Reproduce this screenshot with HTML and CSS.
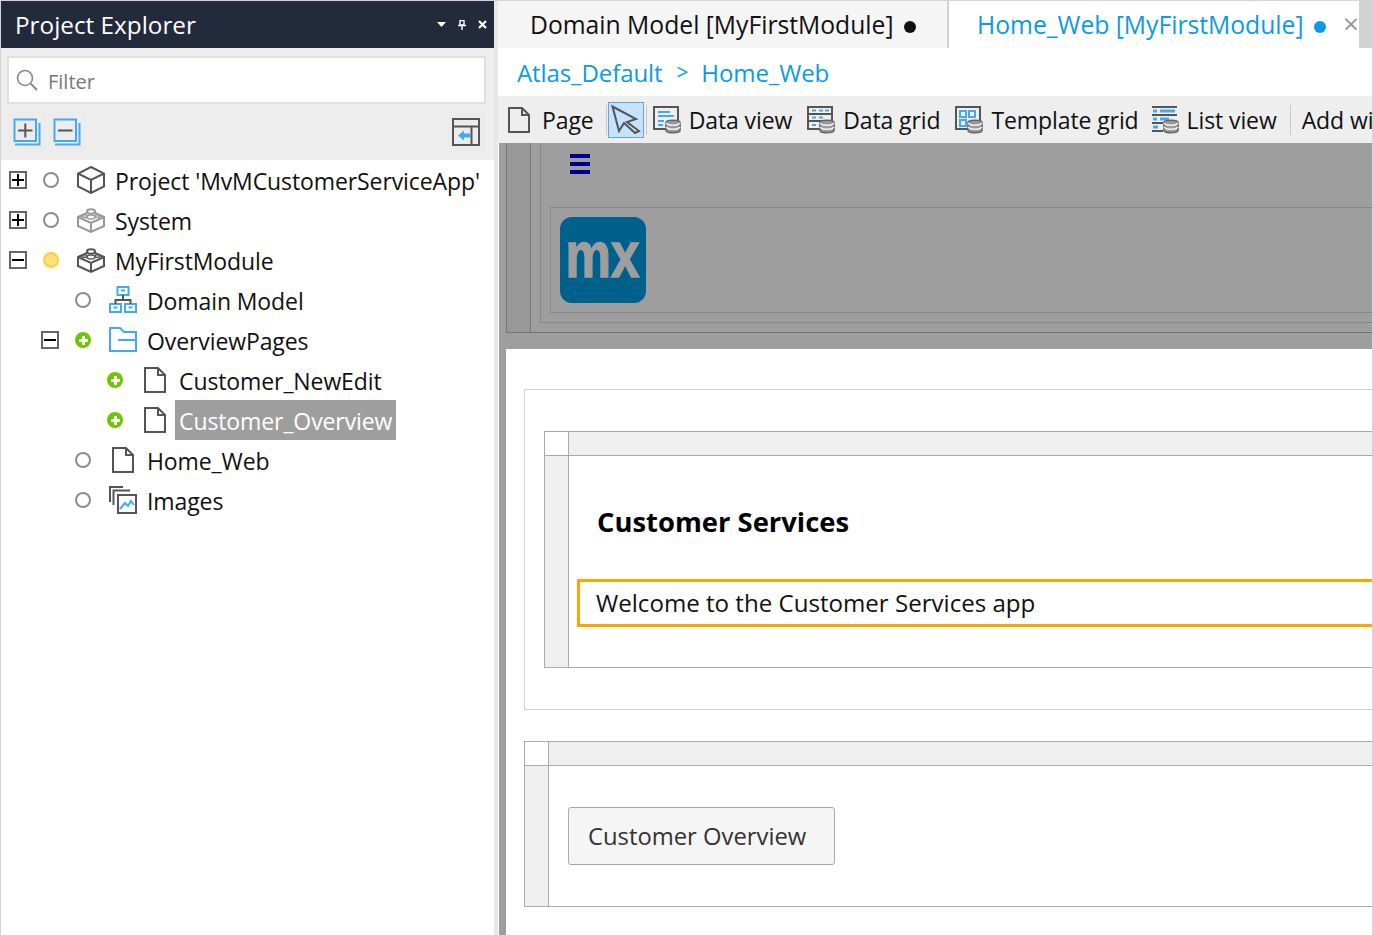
FILE: index.html
```html
<!DOCTYPE html>
<html>
<head>
<meta charset="UTF-8">
<title>Home_Web</title>
<link rel="stylesheet" href="styles.css">
</head>
<body>

<svg class="defs" width="0" height="0">
	<defs>
		<symbol id="page" viewBox="0 0 28 28">
			<path d="M4 2H17L24 9V26H4Z M17 2V9H24" fill="none" stroke="#555" stroke-width="2"/>
		</symbol>
		<symbol id="brick" viewBox="0 0 28 28">
			<path d="M1 11L14 5L27 11V20L14 26L1 20Z M1 11L14 17L27 11 M14 17V26" fill="none" stroke="currentColor" stroke-width="2"/>
			<ellipse cx="14" cy="5.5" rx="4" ry="2.2" fill="#fff" stroke="currentColor" stroke-width="2"/>
			<ellipse cx="14" cy="11" rx="4" ry="2" fill="none" stroke="currentColor" stroke-width="1.5"/>
			<ellipse cx="7.5" cy="10" rx="2.5" ry="1.3" fill="none" stroke="currentColor" stroke-width="1.5"/>
			<ellipse cx="20.5" cy="10" rx="2.5" ry="1.3" fill="none" stroke="currentColor" stroke-width="1.5"/>
		</symbol>
		<symbol id="db" viewBox="0 0 16 15">
			<path d="M1 3.5C1 .5 15 .5 15 3.5V11.5C15 14.5 1 14.5 1 11.5Z" fill="#999" stroke="#666" stroke-width="1.6"/>
			<path d="M1 4C3 7 13 7 15 4 M1 8C3 11 13 11 15 8" fill="none" stroke="#eee" stroke-width="1.4"/>
		</symbol>
	</defs>
</svg>

<div class="window">

	<!-- 왼쪽 패널 -->
	<div class="explorer">
		<div class="pane-title">
			<span>Project Explorer</span>
			<div class="pane-controls">
				<svg width="9" height="5" viewBox="0 0 9 5"><path d="M0 0H9L4.5 5Z" fill="#fff"/></svg>
				<svg width="8" height="10" viewBox="0 0 8 10"><path d="M2 .5H6V5H2Z M0 5.500H8 M4 6V10" fill="none" stroke="#fff" stroke-width="1.4"/></svg>
				<svg width="9" height="9" viewBox="0 0 9 9"><path d="M1 1L8 8M8 1L1 8" stroke="#fff" stroke-width="2.2"/></svg>
			</div>
		</div>

		<div class="pane-tools">
			<div class="filter">
				<svg width="22" height="22" viewBox="0 0 22 22"><circle cx="9" cy="9" r="7.500" fill="none" stroke="#888" stroke-width="1.6"/><path d="M14.500 14.500L21 21" stroke="#888" stroke-width="1.8"/></svg>
				<span>Filter</span>
			</div>
			<div class="tool-row">
				<span class="tool-btn">
					<svg width="28" height="28" viewBox="0 0 28 28"><path d="M1.500 1.500H23V23H1.500Z" fill="none" stroke="#42aaf5" stroke-width="2"/><path d="M26.500 5V26.500H2" fill="none" stroke="#42aaf5" stroke-width="2"/><path d="M5 12.500H19.500M12.300 5.500V19.500" stroke="#555" stroke-width="2"/></svg>
				</span>
				<span class="tool-btn">
					<svg width="28" height="28" viewBox="0 0 28 28"><path d="M1.500 1.500H23V23H1.500Z" fill="none" stroke="#42aaf5" stroke-width="2"/><path d="M26.500 5V26.500H2" fill="none" stroke="#42aaf5" stroke-width="2"/><path d="M5 12.500H19.500" stroke="#555" stroke-width="2"/></svg>
				</span>
				<span class="tool-btn tool-last">
					<svg width="28" height="28" viewBox="0 0 28 28"><path d="M1 1H27V27H1Z M1 8.500H27 M19.500 8.500V27" fill="none" stroke="#555" stroke-width="2"/><path d="M6 17.500L12 12.500V15.500H18V19.500H12V22.500Z" fill="#42aaf5"/></svg>
				</span>
			</div>
		</div>

		<div class="tree">
			<div class="row">
				<span class="exp"><i class="h"></i><i class="v"></i></span>
				<span class="dot"></span>
				<svg class="ico" viewBox="0 0 28 28"><path d="M14 1L27 7.500V20.500L14 27L1 20.500V7.500Z M1 7.500L14 14L27 7.500 M14 14V27" fill="none" stroke="#555" stroke-width="2"/></svg>
				<span class="label">Project 'MvMCustomerServiceApp'</span>
			</div>
			<div class="row">
				<span class="exp"><i class="h"></i><i class="v"></i></span>
				<span class="dot"></span>
				<svg class="ico faded"><use href="#brick"/></svg>
				<span class="label">System</span>
			</div>
			<div class="row">
				<span class="exp"><i class="h"></i></span>
				<span class="dot yellow"></span>
				<svg class="ico dark"><use href="#brick"/></svg>
				<span class="label">MyFirstModule</span>
			</div>
			<div class="row lvl1">
				<span class="exp none"></span>
				<span class="dot"></span>
				<svg class="ico" viewBox="0 0 28 28">
					<path d="M8.500 1H19.500V9H8.500Z M1 18H12V26H1Z M16 18H27V26H16Z" fill="none" stroke="#42aaf5" stroke-width="2"/>
					<path d="M14 9V14 M6.500 18V14H21.500V18" fill="none" stroke="#555" stroke-width="2"/>
					<path d="M12 4.500H16 M4.500 21.500H8.500 M19.500 21.500H23.500" stroke="#42aaf5" stroke-width="2"/>
				</svg>
				<span class="label">Domain Model</span>
			</div>
			<div class="row lvl1">
				<span class="exp"><i class="h"></i></span>
				<span class="dot green"></span>
				<svg class="ico" viewBox="0 0 28 28"><path d="M1 2H11L15 6H27V25H1Z M9 14H27" fill="none" stroke="#42aaf5" stroke-width="2"/></svg>
				<span class="label">OverviewPages</span>
			</div>
			<div class="row lvl2">
				<span class="exp none"></span>
				<span class="dot green"></span>
				<svg class="ico"><use href="#page"/></svg>
				<span class="label">Customer_NewEdit</span>
			</div>
			<div class="row lvl2">
				<span class="exp none"></span>
				<span class="dot green"></span>
				<svg class="ico"><use href="#page"/></svg>
				<span class="label selected">Customer_Overview</span>
			</div>
			<div class="row lvl1">
				<span class="exp none"></span>
				<span class="dot"></span>
				<svg class="ico"><use href="#page"/></svg>
				<span class="label">Home_Web</span>
			</div>
			<div class="row lvl1">
				<span class="exp none"></span>
				<span class="dot"></span>
				<svg class="ico" viewBox="0 0 28 28">
					<path d="M1 16V1H14 M4.500 19V4.500H21" fill="none" stroke="#555" stroke-width="2"/>
					<path d="M9 9H27V27H9Z" fill="#fff" stroke="#555" stroke-width="2"/>
					<path d="M11 23L16 17L19 20L22 15L25 19" fill="none" stroke="#42aaf5" stroke-width="2"/>
				</svg>
				<span class="label">Images</span>
			</div>
		</div>
	</div>

	<!-- 오른쪽 편집기 -->
	<div class="editor">
		<div class="tabs">
			<div class="tab">Domain Model [MyFirstModule]<b class="mark"></b></div>
			<div class="tab active">Home_Web [MyFirstModule]<b class="mark"></b><span class="tab-x">×</span></div>
		</div>

		<div class="crumbs"><span>Atlas_Default</span><span class="gt">&gt;</span><span>Home_Web</span></div>

		<div class="widgets">
			<span class="wd wd-page"><svg class="wico"><use href="#page"/></svg>Page</span>
			<span class="sep sep-a"></span>
			<span class="pointer">
				<svg width="34" height="34" viewBox="0 0 34 34"><path d="M3.500 3.500L27 16L18 19L30 28L26 30L15 20L10 28Z" fill="none" stroke="#555" stroke-width="2"/></svg>
			</span>
			<span class="sep sep-b"></span>
			<span class="wd wd-view">
				<svg class="wico" viewBox="0 0 28 28">
					<path d="M1 1H25V23H1Z" fill="none" stroke="#555" stroke-width="2"/>
					<path d="M5 6H17 M5 10H21 M5 15H11 M5 19H10" stroke="#42aaf5" stroke-width="2"/>
					<use href="#db" x="12" y="13" width="16" height="15"/>
				</svg>Data view
			</span>
			<span class="wd wd-grid">
				<svg class="wico" viewBox="0 0 28 28">
					<path d="M1 1H25V23H1Z M1 8H25 M1 15H25" fill="none" stroke="#555" stroke-width="2"/>
					<path d="M5 4.500H9 M12 4.500H16 M18 4.500H22 M5 11.500H9 M12 11.500H16 M5 19H9" stroke="#42aaf5" stroke-width="2"/>
					<use href="#db" x="12" y="13" width="16" height="15"/>
				</svg>Data grid
			</span>
			<span class="wd wd-tpl">
				<svg class="wico" viewBox="0 0 28 28">
					<path d="M1 1H25V23H1Z" fill="none" stroke="#555" stroke-width="2"/>
					<path d="M5 5H11V11H5Z M14 5H20V11H14Z M5 14H11V20H5Z" fill="none" stroke="#42aaf5" stroke-width="2"/>
					<use href="#db" x="12" y="13" width="16" height="15"/>
				</svg>Template grid
			</span>
			<span class="wd wd-list">
				<svg class="wico" viewBox="0 0 28 28">
					<path d="M1 1H26 M1 9H26 M1 17H12 M1 25H12" stroke="#555" stroke-width="2"/>
					<path d="M2 5H6 M9 5H24 M2 13H6 M9 13H18 M2 21H7" stroke="#42aaf5" stroke-width="3"/>
					<use href="#db" x="12" y="13" width="16" height="15"/>
				</svg>List view
			</span>
			<span class="sep sep-c"></span>
			<span class="wd wd-add">Add widget</span>
		</div>

		<div class="canvas">
			<div class="locked">
				<div class="lock-box">
					<div class="lock-col"></div>
					<div class="lock-inner">
						<div class="menu-icon"><i></i><i></i><i></i></div>
						<div class="logo-box">
							<svg class="logo" width="86" height="86" viewBox="0 0 86 86">
								<rect width="86" height="86" rx="12" fill="#00608c"/>
								<text x="5.500" y="60" textLength="74" lengthAdjust="spacingAndGlyphs" class="logo-text">mx</text>
							</svg>
						</div>
					</div>
				</div>
			</div>

			<div class="content">
				<div class="container-box">
					<div class="layout-grid">
						<div class="grid-head"><span class="corner"></span><span class="head-fill"></span></div>
						<div class="grid-body body-a">
							<div class="grid-side"></div>
							<div class="grid-main main-a">
								<h2>Customer Services</h2>
								<div class="welcome">Welcome to the Customer Services app</div>
							</div>
						</div>
					</div>
				</div>

				<div class="layout-grid second">
					<div class="grid-head"><span class="corner"></span><span class="head-fill"></span></div>
					<div class="grid-body body-b">
						<div class="grid-side"></div>
						<div class="grid-main main-b">
							<button type="button" class="action">Customer Overview</button>
						</div>
					</div>
				</div>
			</div>
		</div>
	</div>

</div>

</body>
</html>
```

FILE: styles.css
```css
* {box-sizing: border-box;}
html, body {margin: 0; padding: 0;}
body {font-family: "Open Sans", "Noto Sans", sans-serif; font-size: 23px; color: #111; background: #fff;}
.defs {position: absolute;}

.window {display: flex; width: 1373px; height: 936px; border: 1px solid #d4d4d4; overflow: hidden;}

/* left panel */
.explorer {flex: none; width: 497px; border-right: 4px solid #e8e8e8; display: flex; flex-direction: column;}
.pane-title {height: 47px; background: #232a3c; color: #fff; display: flex; align-items: center; justify-content: space-between; padding: 0 7px 0 14px; font-size: 24.3px;}
.pane-controls {display: flex; align-items: center; gap: 12px;}
.pane-tools {height: 112px; background: #eeeeee; padding: 8px 8px 0 6px;}
.filter {height: 48px; background: #fff; border: 2px solid #e0e0e0; display: flex; align-items: center; gap: 10px; padding-left: 7px; color: #777; font-size: 20px;}
.filter span {padding-top: 3px;}
.tool-row {display: flex; gap: 2px; margin: 8px 1px 0 1px;}
.tool-btn {width: 38px; height: 40px; background: #ececec; display: flex; align-items: center; justify-content: center;}
.tool-last {margin-left: auto;}

.tree {flex: 1; background: #fff;}
.row {height: 40px; display: flex; align-items: center; padding-left: 8px;}
.lvl1 {padding-left: 40px;}
.lvl2 {padding-left: 72px;}
.exp {position: relative; flex: none; width: 18px; height: 18px; border: 2px solid #666; background: #fff;}
.exp i {position: absolute; background: #000;}
.exp .h {left: 1px; right: 1px; top: 6px; height: 2px;}
.exp .v {top: 1px; bottom: 1px; left: 6px; width: 2px;}
.exp.none {border: 0; background: none;}
.dot {position: relative; flex: none; width: 16px; height: 16px; margin-left: 16px; border-radius: 50%; border: 2px solid #8e8e8e; background: #fff;}
.dot.yellow {background: #ffdf7a; border-color: #ffcf40;}
.dot.green {background: #6dc800; border: 0;}
.dot.green::before {content: ""; position: absolute; left: 3.5px; width: 9px; top: 6.5px; height: 3px; background: #fff;}
.dot.green::after {content: ""; position: absolute; top: 3.5px; height: 9px; left: 6.5px; width: 3px; background: #fff;}
.ico {flex: none; width: 28px; height: 28px; margin-left: 18px; margin-right: 6px;}
.faded {color: #999;}
.dark {color: #555;}
.label {padding: 0 4px; height: 40px; line-height: 43px; white-space: nowrap; letter-spacing: -0.1px;}
.selected {background: #9e9e9e; color: #fff;}

/* editor */
.editor {flex: 1; min-width: 0; display: flex; flex-direction: column;}
.tabs {height: 47px; flex: none; display: flex; background: #d2d2d2; font-size: 24.7px; white-space: nowrap;}
.tab {width: 449px; background: #f5f5f5; padding-left: 32px; line-height: 48px;}
.tab.active {width: 410px; margin-left: 2px; background: #fff; color: #0b9ae6; padding-left: 28px; position: relative;}
.mark {display: inline-block; width: 12px; height: 12px; border-radius: 50%; background: #111; margin-left: 10px; vertical-align: 1px;}
.active .mark {background: #0b9ae6;}
.tab-x {position: absolute; left: 394px; top: -2px; color: #999; font-size: 28px;}
.crumbs {height: 48px; flex: none; background: #fff; color: #0b9ae6; display: flex; align-items: center; padding-left: 19px; font-size: 24px; letter-spacing: -0.1px;}
.gt {margin: 0 13px 0 14px; font-size: 21px;}
.widgets {height: 47px; flex: none; background: #eeeeee; display: flex; align-items: center; padding-left: 10px; white-space: nowrap; overflow: hidden; letter-spacing: -0.1px;}
.wd {display: flex; align-items: center; flex: none;}
.wico {width: 28px; height: 28px; margin-right: 8px; flex: none;}
.wd-page .wico {margin-left: -3px; margin-right: 9px;}
.sep {flex: none; width: 1px; height: 30px; background: #c8c8c8;}
.sep-a {margin-left: 12px;}
.pointer {flex: none; width: 36px; height: 36px; margin-left: 1px; background: #c5e2ff; border: 1px solid #6d9fd8; display: flex; align-items: center; justify-content: center;}
.sep-b {margin-left: 2px;}
.wd-view {margin-left: 6px;}
.wd-grid {margin-left: 15px;}
.wd-tpl {margin-left: 15px;}
.wd-list {margin-left: 12px;}
.sep-c {margin-left: 13px;}
.wd-add {margin-left: 11px;}

.canvas {flex: 1; min-height: 0; background: #fff; overflow: hidden; display: flex; flex-direction: column; border-left: 1px solid #fff;}
.locked {height: 206px; flex: none; background: #9e9e9e; padding-left: 7px;}
.lock-box {height: 190px; display: flex; border-left: 1px solid #777; border-bottom: 1px solid #777;}
.lock-col {width: 24px; flex: none; background: #989898; border-right: 1px solid #777;}
.lock-inner {flex: 1; margin-left: 9px; height: 180px; border-left: 1px solid #888; border-bottom: 1px solid #888; padding-left: 9px;}
.menu-icon {width: 20px; margin: 11px 0 0 20px; display: flex; flex-direction: column; gap: 4px;}
.menu-icon i {display: block; height: 4px; background: #00008b;}
.logo-box {margin-top: 33px; height: 106px; border: 1px solid #888; border-right: 0; padding: 9px;}
.logo {display: block;}
.logo-text {font-family: "Liberation Sans", sans-serif; font-weight: bold; font-size: 65px; fill: #9e9e9e; stroke: #9e9e9e; stroke-width: 1.5px;}

.content {flex: 1; border-left: 7px solid #9e9e9e; padding-left: 18px; padding-top: 40px;}
.container-box {height: 321px; width: 1000px; border: 1px solid #d0d0d0; padding: 41px 0 0 19px;}
.layout-grid {width: 1000px; border: 1px solid #aaa; border-right: 0;}
.grid-head {display: flex; height: 24px; border-bottom: 1px solid #aaa;}
.corner {width: 24px; flex: none; background: #fff; border-right: 1px solid #aaa;}
.head-fill {flex: 1; background: #efefef;}
.grid-body {display: flex;}
.body-a {height: 211px;}
.body-b {height: 140px;}
.grid-side {width: 24px; flex: none; background: #efefef; border-right: 1px solid #aaa;}
.grid-main {flex: 1;}
.main-a {padding: 45px 0 0 8px;}
h2 {margin: 0 0 0 20px; font-size: 27.4px; font-weight: bold; color: #000; line-height: 42px;}
.welcome {margin-top: 36px; height: 48px; border: 3px solid #ffa500; border-right: 0; padding-left: 16px; line-height: 42px; font-size: 24.1px;}
.second {margin-top: 31px;}
.main-b {padding: 41px 0 0 19px;}
.action {display: block; width: 267px; height: 58px; background: #f5f5f5; border: 1px solid #aaa; border-radius: 3px; font-family: inherit; font-size: 23.8px; color: #333; padding: 0 0 0 19px; text-align: left;}
```
